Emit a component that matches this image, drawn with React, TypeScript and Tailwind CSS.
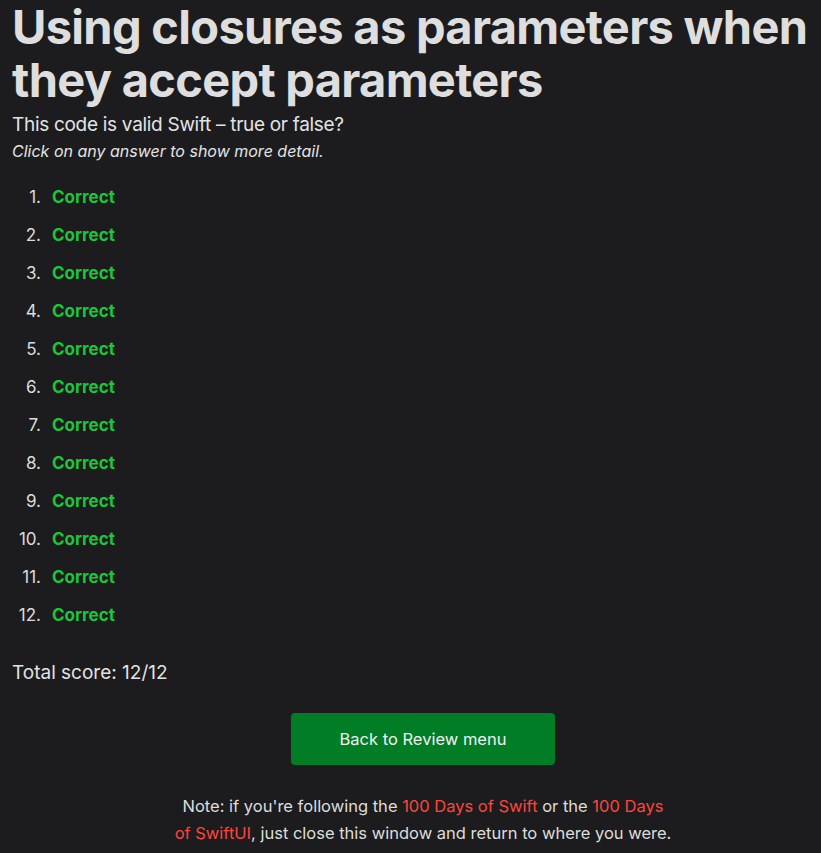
import React from "react";

const answers = Array.from({ length: 12 }, (_, i) => i + 1);

export default function App() {
  return (
    <div className="min-h-[853px] bg-[#1c1c1e] text-[#e3e3e3] font-['Inter',sans-serif] overflow-hidden">
      <div className="pl-[12px] pt-0">
        <h1 className="text-[47px] font-bold leading-[53px] tracking-[-0.7px] text-[#dedede]">
          Using closures as parameters when
          <br />
          they accept parameters
        </h1>
        <p className="text-[19px] tracking-[-0.3px] leading-[26px] mt-[6px]">This code is valid Swift – true or false?</p>
        <p className="text-[16px] italic leading-[24px] mt-[1px]">Click on any answer to show more detail.</p>

        {/* Answers */}
        <ol className="mt-[22px] flex flex-col gap-[14px]">
          {answers.map((n) => (
            <li key={n} className="flex items-center text-[17px] leading-[24px]">
              <span className="w-[29px] text-right text-[#dcdcdc]">{n}.</span>
              <span className="ml-[11px] font-bold text-[#1ec43a]">Correct</span>
            </li>
          ))}
        </ol>

        <p className="mt-[34px] text-[19px] leading-[24px]">Total score: 12/12</p>
      </div>

      <div className="pl-[25px] text-center mt-[28px]">
        <button className="w-[264px] h-[52px] rounded-[4px] bg-[#007d25] text-[16.5px] text-[#f2f2f2]">
          Back to Review menu
        </button>
        <p className="mt-[28px] text-[16.5px] leading-[27px] text-[#dcdcdc]">
          Note: if you're following the <span className="text-[#ff453a]">100 Days of Swift</span> or the{" "}
          <span className="text-[#ff453a]">
            100 Days
            <br />
            of SwiftUI
          </span>
          , just close this window and return to where you were.
        </p>
      </div>
    </div>
  );
}
